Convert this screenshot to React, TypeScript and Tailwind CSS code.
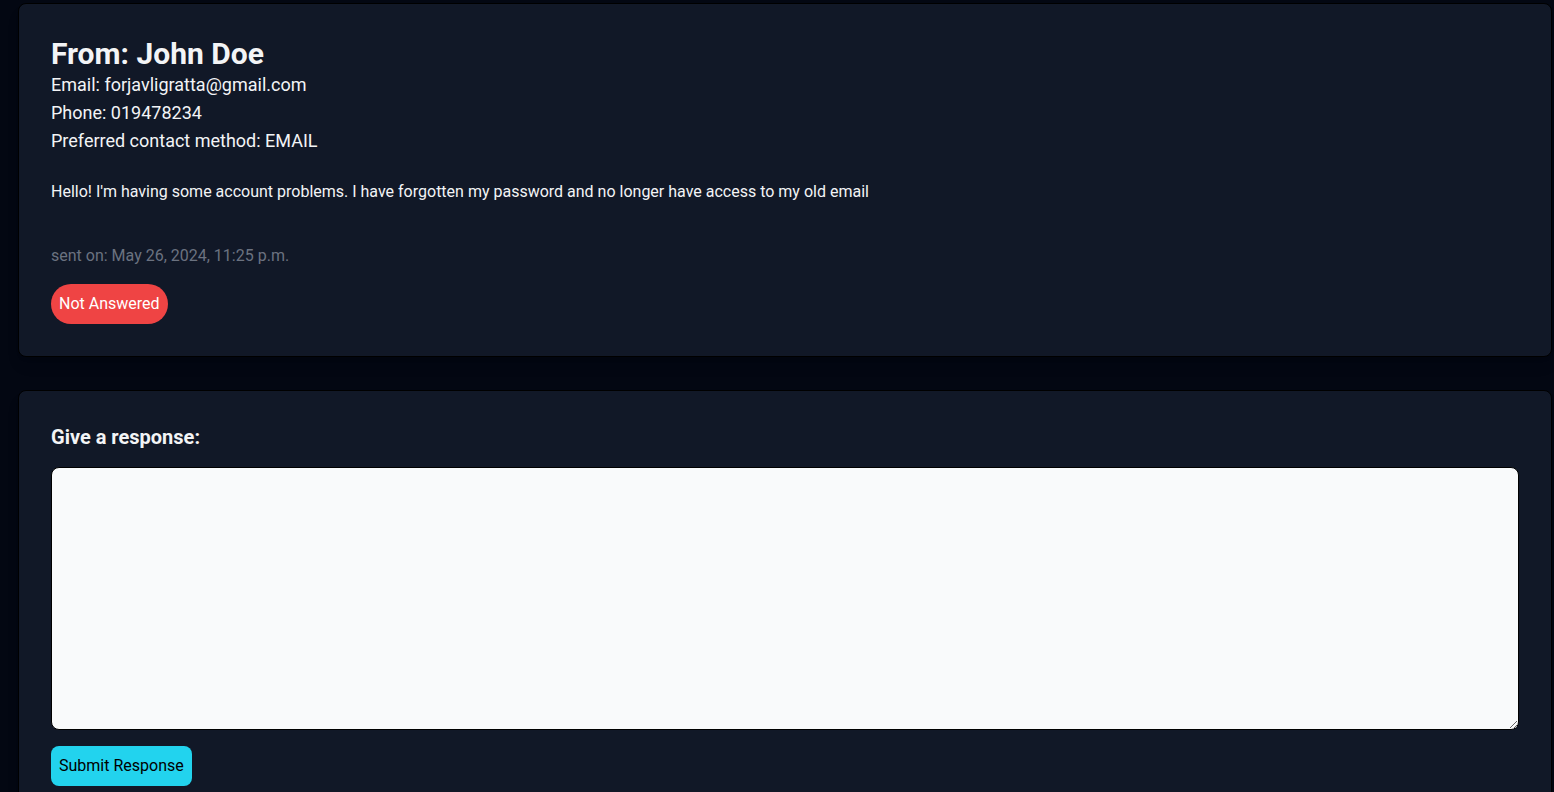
import React from 'react';

export default function App() {
  return (
    <div className="min-h-screen bg-[#030712] font-['Roboto',sans-serif] text-[#f3f4f6] overflow-hidden">
      <div className="flex flex-col gap-[33px] pt-[3px] pl-[18px] pr-[2px]">
        {/* Message card */}
        <div className="bg-[#111827] border border-black rounded-lg p-8 shadow-lg">
          <h1 className="text-3xl font-bold leading-9 -mb-px">From: John Doe</h1>
          <p className="text-lg leading-7">Email: forjavligratta@gmail.com</p>
          <p className="text-lg leading-7">Phone: 019478234</p>
          <p className="text-lg leading-7">Preferred contact method: EMAIL</p>
          <p className="mt-[25px] text-base leading-6">
            Hello! I'm having some account problems. I have forgotten my password and no longer have access to my old email
          </p>
          <p className="mt-10 text-base leading-6 text-[#6b7280]">sent on: May 26, 2024, 11:25 p.m.</p>
          <span className="mt-4 inline-flex h-10 items-center rounded-full bg-[#ef4444] px-2 text-base text-white">
            Not Answered
          </span>
        </div>

        {/* Response card */}
        <div className="bg-[#111827] border border-black rounded-lg p-8 shadow-lg">
          <label className="block text-xl font-bold leading-7">Give a response:</label>
          <textarea className="mt-4 block h-[263px] w-full rounded-lg border border-black bg-[#f9fafb] p-2 text-black" />
          <button className="mt-4 h-10 rounded-lg bg-[#22d3ee] px-2 text-base text-black">Submit Response</button>
        </div>
      </div>
    </div>
  );
}
